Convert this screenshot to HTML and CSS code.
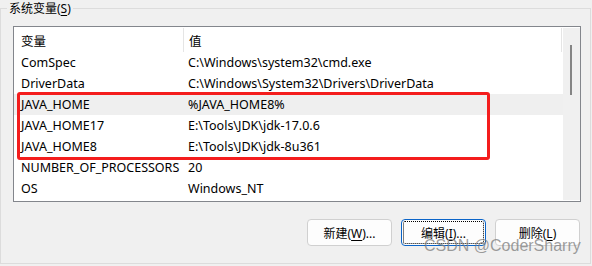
FILE: index.html
```html
<!DOCTYPE html>
<html lang="zh-CN">
<head>
<meta charset="utf-8">
<link rel="stylesheet" href="styles.css">
</head>
<body>
<fieldset class="group">
  <legend class="group-title">系统变量(<u>S</u>)</legend>
  <div class="listview">
    <div class="list">
      <div class="header">
        <div class="col1">变量</div>
        <div class="col2">值</div>
      </div>
      <div class="row"><div class="col1">ComSpec</div><div class="col2">C:\Windows\system32\cmd.exe</div></div>
      <div class="row"><div class="col1">DriverData</div><div class="col2">C:\Windows\System32\Drivers\DriverData</div></div>
      <div class="row hover"><div class="col1">JAVA_HOME</div><div class="col2">%JAVA_HOME8%</div></div>
      <div class="row"><div class="col1">JAVA_HOME17</div><div class="col2">E:\Tools\JDK\jdk-17.0.6</div></div>
      <div class="row"><div class="col1">JAVA_HOME8</div><div class="col2">E:\Tools\JDK\jdk-8u361</div></div>
      <div class="row"><div class="col1">NUMBER_OF_PROCESSORS</div><div class="col2">20</div></div>
      <div class="row"><div class="col1">OS</div><div class="col2">Windows_NT</div></div>
      <div class="mark"></div>
    </div>
    <div class="scrollbar"><div class="thumb"></div></div>
  </div>
  <div class="buttons">
    <button class="btn">新建(<u>W</u>)...</button>
    <button class="btn focused">编辑(<u>I</u>)...</button>
    <button class="btn">删除(<u>L</u>)</button>
  </div>
</fieldset>
<div class="watermark">CSDN @CoderSharry</div>
</body>
</html>
```
FILE: styles.css
```css
* { box-sizing: border-box; }
html, body { margin: 0; padding: 0; }
body {
  width: 592px;
  height: 266px;
  background: #f0f0f0;
  font-family: "Noto Sans", "Noto Sans CJK SC", sans-serif;
  font-size: 12px;
  color: #000;
  position: relative;
  overflow: hidden;
}
.group {
  margin: 0;
  padding: 0 0 15px 0;
  width: 591px;
  height: 264px;
  border: 1px solid #dcdcdc;
  min-width: 0;
}
.group-title {
  margin-left: 6px;
  padding: 0 2px;
  line-height: 17px;
  font-size: 12px;
}
.group-title u, .btn u { text-decoration-thickness: 1px; text-underline-offset: 2px; }
.listview {
  margin: 9px 9px 0 12px;
  height: 176px;
  border: 1px solid #83868c;
  background: #fff;
  display: flex;
  font-size: 12.5px;
}
.list {
  flex: 1;
  position: relative;
}
.header, .row {
  display: flex;
  align-items: center;
}
.header { height: 25px; }
.row { height: 21px; }
.col1 { width: 169px; padding-left: 7px; white-space: nowrap; }
.col2 { flex: 1; padding-left: 5px; white-space: nowrap; }
.header .col1, .header .col2 {
  height: 24px;
  margin-top: 1px;
  display: flex;
  align-items: center;
}
.header .col1 { width: 170px; border-right: 1px solid #e5e5e5; }
.header .col2 { border-right: 1px solid #e5e5e5; margin-right: 1px; }
.row.hover { background: #efefef; }
.mark {
  position: absolute;
  left: 3px;
  top: 65px;
  width: 473px;
  height: 68px;
  border: 3px solid #f41d1d;
  border-radius: 3px;
}
.scrollbar {
  width: 17px;
  margin: 1px 0;
  background: #f0f0f0;
  position: relative;
}
.thumb {
  position: absolute;
  left: 7px;
  top: 17px;
  width: 2px;
  height: 50px;
  background: #858585;
}
.buttons {
  display: flex;
  justify-content: flex-end;
  gap: 9px;
  margin: 17px 10px 0 0;
}
.btn {
  width: 85px;
  height: 27px;
  border: 1px solid #d0d0d0;
  border-radius: 4px;
  background: #fdfdfd;
  font-family: "Noto Sans", "Noto Sans CJK SC", sans-serif;
  font-size: 12px;
  color: #000;
  padding: 0;
}
.btn.focused {
  border-color: #0a64c8;
  outline: 1px dotted #000;
  outline-offset: -3px;
}
.watermark {
  position: absolute;
  left: 424px;
  top: 236px;
  font-family: "Liberation Sans", Arial, sans-serif;
  font-size: 16px;
  line-height: 20px;
  color: rgba(125, 125, 125, 0.75);
  white-space: nowrap;
}
```
